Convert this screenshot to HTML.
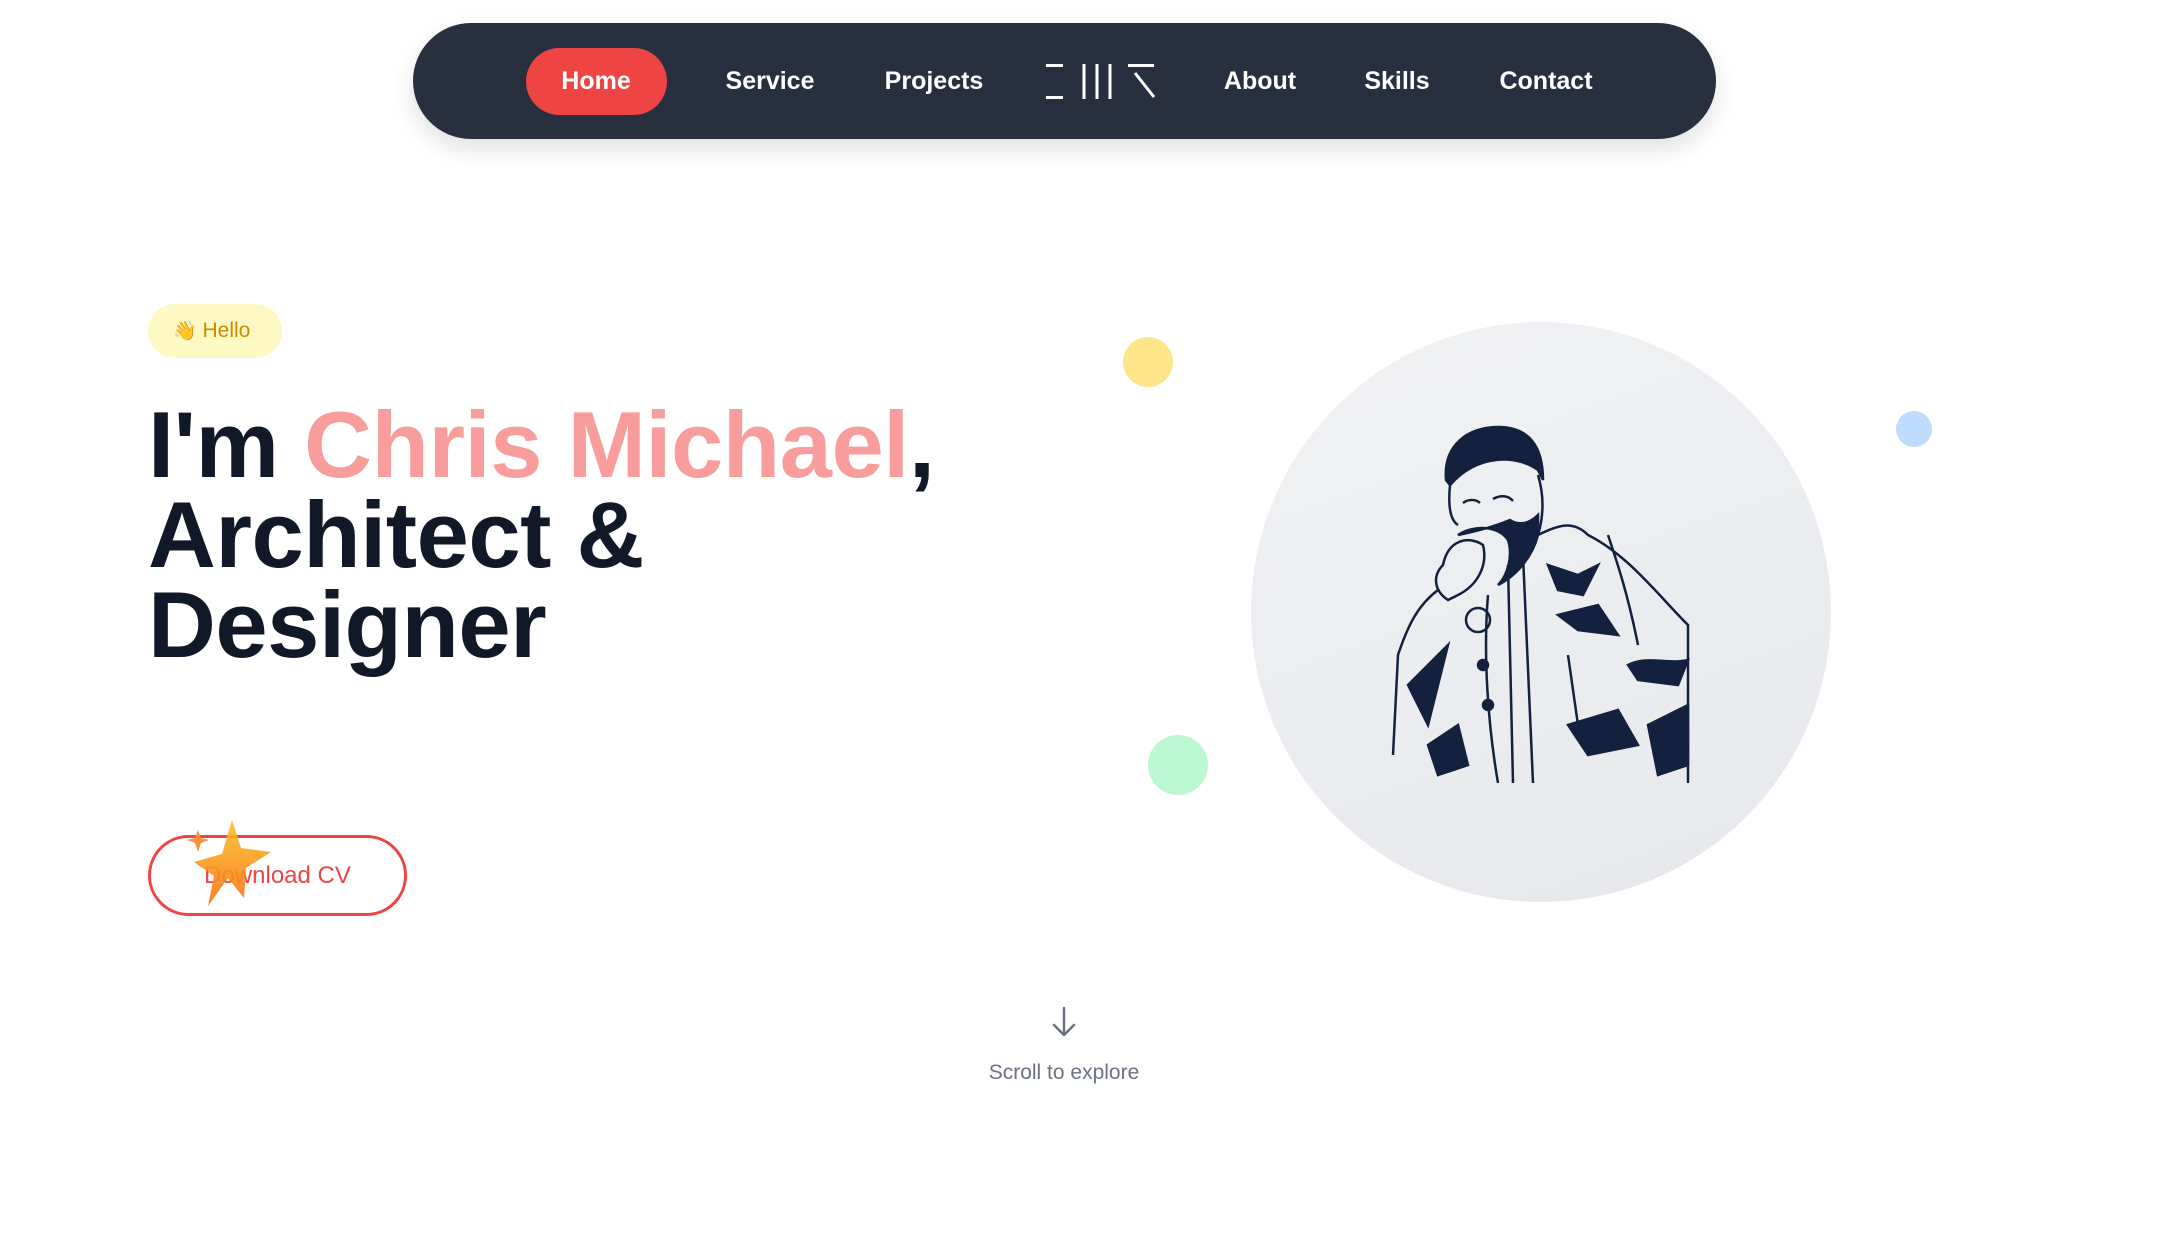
<!DOCTYPE html>
<html><head><meta charset="utf-8"><style>
*{margin:0;padding:0;box-sizing:border-box}
body{width:2157px;height:1246px;background:#fff;font-family:"Liberation Sans",sans-serif;position:relative;overflow:hidden}
.nav{position:absolute;left:413px;top:23px;width:1303px;height:116px;background:#282f3e;border-radius:58px;box-shadow:0 10px 25px rgba(0,0,0,.12)}
.nav a{position:absolute;top:0;height:116px;line-height:116px;color:#fff;font-size:25px;font-weight:bold;transform:translateX(-50%);text-decoration:none;white-space:nowrap}
.home{position:absolute;left:113px;top:25px;width:141px;height:67px;background:#ef4444;border-radius:34px}
.badge{position:absolute;left:148px;top:304px;width:134px;height:54px;border-radius:27px;background:#fef9c3;color:#ca8a04;font-size:21px;line-height:54px;padding-left:25px}
h1{position:absolute;left:148px;top:400px;font-size:94px;line-height:90px;font-weight:bold;color:#111827;letter-spacing:-0.5px}
h1 span{color:#f89c9c}
.btn{position:absolute;left:148px;top:835px;width:259px;height:81px;border:3px solid #ef4444;border-radius:41px;color:#ef4444;font-size:24px;line-height:75px;text-align:center}
.dot{position:absolute;border-radius:50%}
.circle{position:absolute;left:1251px;top:322px;width:580px;height:580px;border-radius:50%;background:linear-gradient(160deg,#f1f2f4,#e6e8ec)}
.scroll{position:absolute;left:0;width:2128px;text-align:center;top:1061px;font-size:21px;color:#6b7280}
</style></head><body>
<div class="nav">
 <div class="home"></div>
 <a style="left:183px">Home</a>
 <a style="left:357px">Service</a>
 <a style="left:521px">Projects</a>
 <svg style="position:absolute;left:633px;top:41px" width="110" height="36" viewBox="0 0 110 36" stroke="#fff" stroke-width="3" fill="none">
  <path d="M0 1.5H17M0 33.5H17M38 0V35M51 0V35M64 0V35M82 1.5H108M89 9L108 33"/>
 </svg>
 <a style="left:847px">About</a>
 <a style="left:984px">Skills</a>
 <a style="left:1133px">Contact</a>
</div>
<div class="badge"><span style="font-size:19px">👋</span> Hello</div>
<h1>I'm <span>Chris Michael</span>,<br>Architect &amp;<br>Designer</h1>
<div class="btn">Download CV</div>
<svg style="position:absolute;left:186px;top:818px" width="90" height="90" viewBox="0 0 90 90">
 <defs><linearGradient id="g" x1="0" y1="0" x2="0" y2="1"><stop offset="0" stop-color="#fbbf24"/><stop offset="1" stop-color="#f97316"/></linearGradient></defs>
 <path d="M46 2L55 30L85 34L60 50L58 80L42 60L22 88L28 58L8 44L36 36Z" fill="url(#g)" opacity=".9"/>
 <path d="M12 12L15 20L23 22L15 25L12 34L9 25L1 22L9 20Z" fill="#fb923c"/>
</svg>
<div class="dot" style="left:1123px;top:337px;width:50px;height:50px;background:#fde68a"></div>
<div class="dot" style="left:1896px;top:411px;width:36px;height:36px;background:#bfdbfe"></div>
<div class="dot" style="left:1148px;top:735px;width:60px;height:60px;background:#bbf7d0"></div>
<div class="circle"></div>
<svg style="position:absolute;left:1388px;top:425px" width="305" height="358" viewBox="0 0 305 358" fill="none" stroke="#13213f" stroke-width="2.5">
 <path d="M58 55C55 20 80 2 110 2C140 2 155 20 155 55L150 45C130 30 90 28 62 60Z" fill="#13213f"/>
 <path d="M62 60C60 80 62 95 70 100M150 50C156 70 156 90 150 110"/>
 <path d="M70 110C85 100 110 100 120 115C125 130 120 150 110 160C130 150 145 130 150 110L150 90C140 100 130 100 122 95C110 100 95 105 70 110Z" fill="#13213f"/>
 <path d="M75 78C80 74 88 74 92 78M105 74C112 70 120 70 125 76"/>
 <path d="M55 140C60 115 80 110 95 120C100 140 90 160 70 170L60 175C45 165 45 150 55 140Z"/>
 <path d="M50 165C30 180 20 200 10 230L5 330M150 110C170 100 185 95 200 110C240 130 270 170 300 200V358"/>
 <path d="M120 140L125 358M135 130L145 358M100 170C95 230 100 300 110 358"/>
 <path d="M20 260C40 240 50 230 60 220L40 300ZM170 190L210 180L230 210L190 205ZM240 240C260 230 280 240 300 235L290 260L250 255ZM180 300L230 285L250 320L200 330ZM260 300L300 280V340L270 350ZM40 320L70 300L80 340L50 350Z" fill="#13213f"/>
 <path d="M160 140L190 150L210 140L195 170L170 165Z" fill="#13213f"/>
 <circle cx="90" cy="195" r="12"/><circle cx="95" cy="240" r="5" fill="#13213f"/><circle cx="100" cy="280" r="5" fill="#13213f"/>
 <path d="M180 230L190 300M220 110C230 140 240 170 250 220"/>
</svg>
<svg style="position:absolute;left:1052px;top:1006px" width="24" height="32" viewBox="0 0 24 32" fill="none" stroke="#6b7280" stroke-width="2.5" stroke-linecap="round" stroke-linejoin="round"><path d="M12 2V29M2 19L12 29L22 19"/></svg>
<div class="scroll">Scroll to explore</div>
</body></html>
